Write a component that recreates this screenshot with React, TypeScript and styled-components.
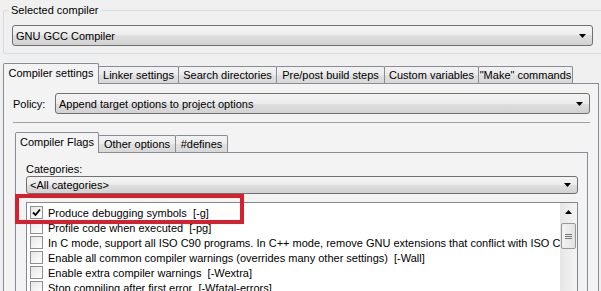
import React from 'react'
import styled, { createGlobalStyle } from 'styled-components'

const GlobalStyle = createGlobalStyle`
  html, body {
    margin: 0;
    padding: 0;
    background: #f0f0f0;
  }
  body {
    font-family: 'Liberation Sans', Arial, sans-serif;
    font-size: 11px;
    color: #000;
  }
`

interface TabInfo {
  label: string
  width: number
}

const outerTabs: TabInfo[] = [
  { label: 'Compiler settings', width: 96 },
  { label: 'Linker settings', width: 81 },
  { label: 'Search directories', width: 99 },
  { label: 'Pre/post build steps', width: 109 },
  { label: 'Custom variables', width: 95 },
  { label: '"Make" commands', width: 95 },
]

const innerTabs: TabInfo[] = [
  { label: 'Compiler Flags', width: 84 },
  { label: 'Other options', width: 78 },
  { label: '#defines', width: 53 },
]

const flags = [
  { text: 'Produce debugging symbols  [-g]', checked: true },
  { text: 'Profile code when executed  [-pg]', checked: false },
  {
    text: 'In C mode, support all ISO C90 programs. In C++ mode, remove GNU extensions that conflict with ISO C++  [-ansi]',
    checked: false,
  },
  {
    text: 'Enable all common compiler warnings (overrides many other settings)  [-Wall]',
    checked: false,
  },
  { text: 'Enable extra compiler warnings  [-Wextra]', checked: false },
  { text: 'Stop compiling after first error  [-Wfatal-errors]', checked: false },
  { text: 'Inhibit all warning messages  [-w]', checked: false },
]

const DropArrow = () => (
  <svg width="7" height="4" viewBox="0 0 7 4">
    <polygon points="0,0 7,0 3.5,4" fill="#000" />
  </svg>
)

function Combo(props: { text: string; width?: number; height?: number }) {
  return (
    <ComboBox $width={props.width} $height={props.height || 21}>
      <ComboText>{props.text}</ComboText>
      <DropArrow />
    </ComboBox>
  )
}

function TabStrip(props: { tabs: TabInfo[] }) {
  return (
    <Strip>
      {props.tabs.map((t, i) => (
        <Tab key={t.label} $active={i === 0} $w={t.width}>
          {t.label}
        </Tab>
      ))}
    </Strip>
  )
}

export default function App() {
  return (
    <Window>
      <GlobalStyle />
      <GroupBox>
        <Legend>Selected compiler</Legend>
        <Combo text="GNU GCC Compiler" width={581} />
      </GroupBox>

      <Notebook>
        <TabStrip tabs={outerTabs} />
        <Page>
          <PolicyRow>
            <PolicyLabel>Policy:</PolicyLabel>
            <Combo text="Append target options to project options" />
          </PolicyRow>
          <InnerArea>
            <TabStrip tabs={innerTabs} />
            <InnerPage>
              <CategoriesLabel>Categories:</CategoriesLabel>
              <Combo text="<All categories>" height={20} />
              <ListBox>
                <Items>
                  {flags.map((f) => (
                    <Row key={f.text}>
                      <CheckBox>
                        {f.checked && (
                          <svg width="11" height="11" viewBox="0 0 11 11">
                            <path
                              d="M2 5.5 L4.5 8 L9 2.5"
                              stroke="#000"
                              strokeWidth="1.8"
                              fill="none"
                            />
                          </svg>
                        )}
                      </CheckBox>
                      <RowText>{f.text}</RowText>
                    </Row>
                  ))}
                </Items>
                <ScrollBar>
                  <ScrollButton>
                    <svg width="7" height="4" viewBox="0 0 7 4">
                      <polygon points="0,4 7,4 3.5,0" fill="#000" />
                    </svg>
                  </ScrollButton>
                  <Thumb>
                    <svg width="7" height="7" viewBox="0 0 7 7">
                      <path d="M0 1.5 H7 M0 3.5 H7 M0 5.5 H7" stroke="#777" strokeWidth="1" />
                    </svg>
                  </Thumb>
                </ScrollBar>
              </ListBox>
            </InnerPage>
          </InnerArea>
        </Page>
      </Notebook>

      <Highlight />
    </Window>
  )
}

const Window = styled.div`
  position: relative;
  width: 601px;
  height: 291px;
  overflow: hidden;
  box-sizing: border-box;
  padding-top: 3px;
  background: #f0f0f0;
`

const GroupBox = styled.fieldset`
  margin: 0 0 0 3px;
  padding: 7px 0 7px 8px;
  width: 640px;
  min-width: 0;
  border: 1px solid #d5dfe5;
  border-radius: 3px;
`

const Legend = styled.legend`
  margin-left: -3px;
  padding: 0 2px;
  height: 15px;
  line-height: 15px;
`

const ComboBox = styled.div<{ $width?: number; $height: number }>`
  display: flex;
  align-items: center;
  box-sizing: border-box;
  flex: ${(p) => (p.$width ? '0 0 auto' : '1 1 auto')};
  width: ${(p) => (p.$width ? p.$width + 'px' : 'auto')};
  height: ${(p) => p.$height}px;
  padding: 0 6px 0 3px;
  border: 1px solid #707070;
  border-radius: 3px;
  background: linear-gradient(#f4f4f4, #ececec 50%, #dfdfdf 50%, #d2d2d2);
`

const ComboText = styled.span`
  flex: 1;
  white-space: pre;
  overflow: hidden;
`

const Notebook = styled.div`
  margin: 9px 0 0 3px;
`

const Strip = styled.div`
  display: flex;
  align-items: flex-end;
  height: 20px;
`

const Tab = styled.div<{ $active?: boolean; $w: number }>`
  position: relative;
  z-index: ${(p) => (p.$active ? 2 : 1)};
  box-sizing: border-box;
  display: flex;
  align-items: center;
  justify-content: center;
  flex-shrink: 0;
  width: ${(p) => p.$w}px;
  height: ${(p) => (p.$active ? 21 : 17)}px;
  margin-left: -1px;
  margin-bottom: ${(p) => (p.$active ? -1 : 0)}px;
  padding-bottom: ${(p) => (p.$active ? 2 : 0)}px;
  border: 1px solid #898c95;
  border-bottom: none;
  border-radius: 2px 2px 0 0;
  white-space: pre;
  background: ${(p) =>
    p.$active ? '#f3f3f3' : 'linear-gradient(#f2f2f2, #ebebeb 50%, #e0e0e0 50%, #d8d8d8)'};

  &:first-child {
    margin-left: 0;
  }
`

const Page = styled.div`
  box-sizing: border-box;
  width: 596px;
  height: 220px;
  padding: 9px 8px 0 9px;
  border: 1px solid #898c95;
  border-bottom: none;
  background: #f3f3f3;
`

const PolicyRow = styled.div`
  display: flex;
  align-items: center;
`

const PolicyLabel = styled.span`
  width: 42px;
  flex-shrink: 0;
`

const InnerArea = styled.div`
  margin-top: 8px;
  padding: 9px 2px 0 2px;
  border-top: 1px solid #a0a0a0;
`

const InnerPage = styled.div`
  box-sizing: border-box;
  height: 160px;
  padding: 10px 9px 0 10px;
  border: 1px solid #898c95;
  border-bottom: none;
  background: #f3f3f3;
  display: flex;
  flex-direction: column;
`

const CategoriesLabel = styled.div`
  line-height: 13px;
  height: 13px;
`

const ListBox = styled.div`
  display: flex;
  margin-top: 8px;
  height: 120px;
  border: 1px solid #828790;
  background: #fff;
`

const Items = styled.div`
  flex: 1;
  min-width: 0;
  overflow: hidden;
  padding-top: 2px;
`

const Row = styled.div`
  display: flex;
  align-items: center;
  height: 15px;
  padding-left: 3px;
`

const CheckBox = styled.div`
  box-sizing: border-box;
  flex-shrink: 0;
  width: 13px;
  height: 13px;
  margin-right: 5px;
  border: 1px solid #8e8f8f;
  background: linear-gradient(135deg, #e6e6e6, #ffffff);
  display: flex;
  align-items: center;
  justify-content: center;
`

const RowText = styled.span`
  white-space: pre;
`

const ScrollBar = styled.div`
  width: 17px;
  flex-shrink: 0;
  background: linear-gradient(to right, #e6e6e6, #f4f4f4);
  display: flex;
  flex-direction: column;
  align-items: center;
`

const ScrollButton = styled.div`
  height: 17px;
  width: 17px;
  display: flex;
  align-items: center;
  justify-content: center;
`

const Thumb = styled.div`
  box-sizing: border-box;
  width: 15px;
  height: 26px;
  margin-top: 3px;
  border: 1px solid #969696;
  border-radius: 2px;
  background: linear-gradient(to right, #f3f3f3, #e2e2e2);
  display: flex;
  align-items: center;
  justify-content: center;
`

const Highlight = styled.div`
  position: absolute;
  left: 15px;
  top: 194px;
  width: 229px;
  height: 30px;
  box-sizing: border-box;
  border: 4px solid #d6202e;
`
